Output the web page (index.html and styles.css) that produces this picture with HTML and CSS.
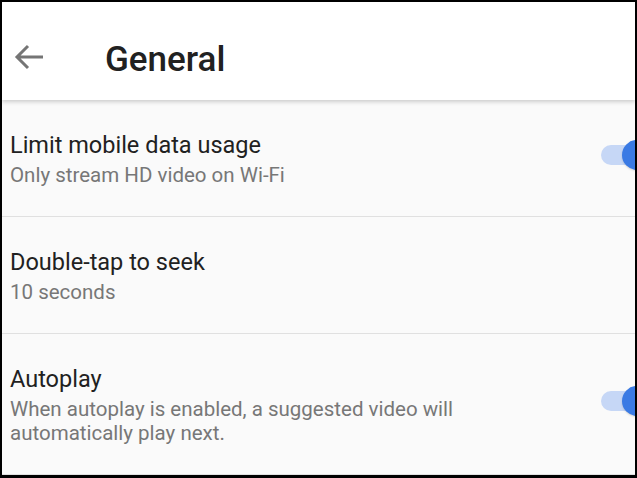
FILE: index.html
```html
<!DOCTYPE html>
<html lang="en">

<head>
    <meta charset="UTF-8">
    <meta name="viewport" content="width=device-width, initial-scale=1.0">
    <title>General</title>
    <link rel="stylesheet" href="styles.css">
</head>

<body>
    <div class="screen">
        <div class="topbar">
            <button class="back" aria-label="Back">
                <svg width="30" height="26" viewBox="0 0 30 26">
                    <path d="M29 13H3M14 2L3 13l11 11" fill="none" stroke="#757575" stroke-width="3" />
                </svg>
            </button>
            <h1 class="title">General</h1>
        </div>
        <div class="list">
            <div class="row">
                <div class="text">
                    <p class="label">Limit mobile data usage</p>
                    <p class="hint">Only stream HD video on Wi-Fi</p>
                </div>
                <div class="toggle on"><span class="thumb"></span></div>
            </div>
            <div class="row">
                <div class="text">
                    <p class="label">Double-tap to seek</p>
                    <p class="hint">10 seconds</p>
                </div>
            </div>
            <div class="row">
                <div class="text">
                    <p class="label">Autoplay</p>
                    <p class="hint">When autoplay is enabled, a suggested video will<br>automatically play next.</p>
                </div>
                <div class="toggle on"><span class="thumb"></span></div>
            </div>
        </div>
    </div>
</body>

</html>
```

FILE: styles.css
```css
body {
    margin: 0;
    font-family: Roboto, "Liberation Sans", sans-serif;
}

.screen {
    width: 637px;
    height: 478px;
    box-sizing: border-box;
    border: 2px solid #000;
    border-bottom-width: 3px;
    background-color: #fafafa;
    overflow: hidden;
}

.topbar {
    position: relative;
    z-index: 1;
    height: 98px;
    padding-top: 12px;
    box-sizing: border-box;
    display: flex;
    align-items: center;
    background-color: #fff;
    box-shadow: 0 2px 4px rgba(0, 0, 0, 0.18);
}

.back {
    margin-left: 12px;
    padding: 0;
    border: none;
    background: none;
    display: flex;
}

.title {
    margin: 6px 0 0 61px;
    font-size: 35px;
    line-height: 40px;
    font-weight: 500;
    color: #212121;
}

.row {
    display: flex;
    align-items: center;
    padding: 31px 0 29px 8px;
    border-bottom: 1px solid #e0e0e0;
}

.text {
    flex: 1;
}

.label {
    margin: 0;
    font-size: 23.5px;
    line-height: 28px;
    color: #212121;
}

.hint {
    margin: 4px 0 0;
    font-size: 20.5px;
    line-height: 24px;
    color: #777;
}

.toggle {
    position: relative;
    width: 50px;
    height: 30px;
    margin-right: -16px;
    margin-bottom: 8px;
}

.toggle::before {
    content: "";
    position: absolute;
    left: 0;
    top: 5px;
    width: 48px;
    height: 20px;
    border-radius: 10px;
    background-color: #c6d7f6;
}

.thumb {
    position: absolute;
    left: 21px;
    top: 0;
    width: 30px;
    height: 30px;
    border-radius: 50%;
    background-color: #3a7ae4;
    box-shadow: 0 1px 2px rgba(0, 0, 0, 0.15);
}
```
